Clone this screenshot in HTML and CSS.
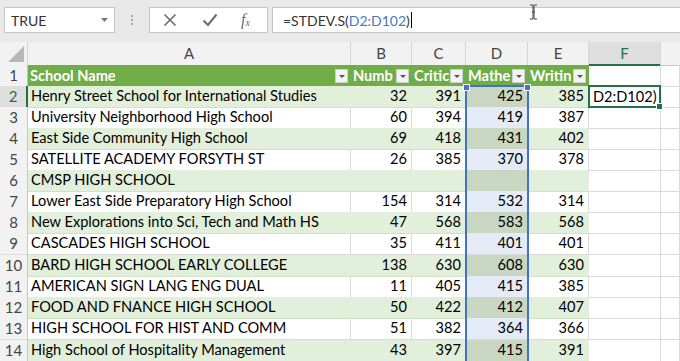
FILE: index.html
```html
<!DOCTYPE html>
<html>
<head>
<meta charset="utf-8">
<link rel="stylesheet" href="styles.css">
</head>
<body>
<div class="toolbar">
  <div class="namebox"><span>TRUE</span><svg class="dd" width="7" height="4" viewBox="0 0 7 4"><path d="M0 0h7L3.5 4z" fill="#777"/></svg></div>
  <div class="grip"><i></i><i></i><i></i></div>
  <div class="fnbox">
    <svg class="ic" width="14" height="14" viewBox="0 0 14 14"><path d="M1.5 1.5l11 11M12.5 1.5l-11 11" stroke="#6b6b6b" stroke-width="1.6" fill="none"/></svg>
    <svg class="ic" width="16" height="14" viewBox="0 0 16 14"><path d="M1.5 7.5l4.5 4.5L14.5 1.5" stroke="#6b6b6b" stroke-width="2" fill="none"/></svg>
    <span class="fx">f<sub>x</sub></span>
  </div>
  <div class="formula"><span>=STDEV.S(</span><span class="ref">D2:D102</span><span>)</span><span class="caret"></span>
    <svg class="ibeam" width="9" height="16" viewBox="0 0 9 16"><path d="M1 1h3v14H1M8 1H5v14h3M3 8h3" stroke="#444" stroke-width="1" fill="none"/></svg>
  </div>
</div>
<div class="sheet">
  <div class="row colhead">
    <div class="corner"><svg width="16" height="16" viewBox="0 0 16 16"><path d="M16 0v16H0z" fill="#b7b7b7"/></svg></div>
    <div class="ch">A</div><div class="ch">B</div><div class="ch">C</div><div class="ch">D</div><div class="ch">E</div><div class="ch active">F</div><div class="ch last"></div>
  </div>
  <div class="row">
    <div class="rh">1</div>
    <div class="c hd"><span>School Name</span><b class="fb"></b></div>
    <div class="c hd"><span>Numb</span><b class="fb"></b></div>
    <div class="c hd"><span>Critic</span><b class="fb"></b></div>
    <div class="c hd"><span>Mathe</span><b class="fb"></b></div>
    <div class="c hd"><span>Writin</span><b class="fb"></b></div>
    <div class="c"></div><div class="c"></div>
  </div>
  <div class="row band">
    <div class="rh active">2</div>
    <div class="c t">Henry Street School for International Studies</div>
    <div class="c t n">32</div><div class="c t n">391</div><div class="c t n sel">425</div><div class="c t n">385</div>
    <div class="c cur">D2:D102)</div><div class="c"></div>
  </div>
  <div class="row">
    <div class="rh">3</div>
    <div class="c t">University Neighborhood High School</div>
    <div class="c t n">60</div><div class="c t n">394</div><div class="c t n sel">419</div><div class="c t n">387</div>
    <div class="c"></div><div class="c"></div>
  </div>
  <div class="row band">
    <div class="rh">4</div>
    <div class="c t">East Side Community High School</div>
    <div class="c t n">69</div><div class="c t n">418</div><div class="c t n sel">431</div><div class="c t n">402</div>
    <div class="c"></div><div class="c"></div>
  </div>
  <div class="row">
    <div class="rh">5</div>
    <div class="c t">SATELLITE ACADEMY FORSYTH ST</div>
    <div class="c t n">26</div><div class="c t n">385</div><div class="c t n sel">370</div><div class="c t n">378</div>
    <div class="c"></div><div class="c"></div>
  </div>
  <div class="row band">
    <div class="rh">6</div>
    <div class="c t">CMSP HIGH SCHOOL</div>
    <div class="c t n"></div><div class="c t n"></div><div class="c t n sel"></div><div class="c t n"></div>
    <div class="c"></div><div class="c"></div>
  </div>
  <div class="row">
    <div class="rh">7</div>
    <div class="c t">Lower East Side Preparatory High School</div>
    <div class="c t n">154</div><div class="c t n">314</div><div class="c t n sel">532</div><div class="c t n">314</div>
    <div class="c"></div><div class="c"></div>
  </div>
  <div class="row band">
    <div class="rh">8</div>
    <div class="c t">New Explorations into Sci, Tech and Math HS</div>
    <div class="c t n">47</div><div class="c t n">568</div><div class="c t n sel">583</div><div class="c t n">568</div>
    <div class="c"></div><div class="c"></div>
  </div>
  <div class="row tall">
    <div class="rh">9</div>
    <div class="c t">CASCADES HIGH SCHOOL</div>
    <div class="c t n">35</div><div class="c t n">411</div><div class="c t n sel">401</div><div class="c t n">401</div>
    <div class="c"></div><div class="c"></div>
  </div>
  <div class="row band">
    <div class="rh">10</div>
    <div class="c t">BARD HIGH SCHOOL EARLY COLLEGE</div>
    <div class="c t n">138</div><div class="c t n">630</div><div class="c t n sel">608</div><div class="c t n">630</div>
    <div class="c"></div><div class="c"></div>
  </div>
  <div class="row">
    <div class="rh">11</div>
    <div class="c t">AMERICAN SIGN LANG ENG DUAL</div>
    <div class="c t n">11</div><div class="c t n">405</div><div class="c t n sel">415</div><div class="c t n">385</div>
    <div class="c"></div><div class="c"></div>
  </div>
  <div class="row band">
    <div class="rh">12</div>
    <div class="c t">FOOD AND FNANCE HIGH SCHOOL</div>
    <div class="c t n">50</div><div class="c t n">422</div><div class="c t n sel">412</div><div class="c t n">407</div>
    <div class="c"></div><div class="c"></div>
  </div>
  <div class="row tall">
    <div class="rh">13</div>
    <div class="c t">HIGH SCHOOL FOR HIST AND COMM</div>
    <div class="c t n">51</div><div class="c t n">382</div><div class="c t n sel">364</div><div class="c t n">366</div>
    <div class="c"></div><div class="c"></div>
  </div>
  <div class="row band">
    <div class="rh">14</div>
    <div class="c t">High School of Hospitality Management</div>
    <div class="c t n">43</div><div class="c t n">397</div><div class="c t n sel">415</div><div class="c t n">391</div>
    <div class="c"></div><div class="c"></div>
  </div>
  <div class="selbox"><i class="hl"></i><i class="hr"></i></div>
</div>
</body>
</html>
```
FILE: styles.css
```css
html, body {
  margin: 0;
  padding: 0;
}
body {
  width: 680px;
  height: 361px;
  overflow: hidden;
  background: #fff;
  font-family: Lato, "Open Sans", sans-serif;
  color: #000;
}
.toolbar {
  height: 42px;
  box-sizing: border-box;
  background: #e9e9e9;
  padding-top: 7px;
  display: flex;
  align-items: flex-start;
}
.namebox {
  margin-left: 4px;
  width: 111px;
  height: 26px;
  box-sizing: border-box;
  background: #fff;
  border: 1px solid #c6c6c6;
  display: flex;
  align-items: center;
  justify-content: space-between;
  padding: 0 6px 0 6px;
  font-size: 14px;
  color: #333;
}
.grip {
  margin: 8px 15px 0 16px;
  width: 3px;
  display: flex;
  flex-direction: column;
  gap: 2px;
}
.grip i {
  display: block;
  width: 2px;
  height: 2px;
  background: #a6a6a6;
}
.fnbox {
  width: 119px;
  height: 26px;
  box-sizing: border-box;
  background: #fff;
  border: 1px solid #c6c6c6;
  display: flex;
  align-items: center;
  padding-left: 13px;
  gap: 25px;
}
.fx {
  font-family: "Liberation Serif", serif;
  font-style: italic;
  font-size: 16px;
  color: #6b6b6b;
  line-height: 1;
  margin-left: -2px;
}
.fx sub {
  font-size: 10px;
  vertical-align: -1px;
}
.formula {
  position: relative;
  flex: 1;
  margin-left: 4px;
  height: 26px;
  box-sizing: border-box;
  background: #fff;
  border: 1px solid #c6c6c6;
  border-right: none;
  display: flex;
  align-items: center;
  padding-left: 10px;
  font-size: 14px;
  color: #333;
}
.formula .ref {
  color: #4a76c2;
}
.caret {
  display: inline-block;
  width: 1px;
  height: 16px;
  background: #000;
  margin-left: 1px;
}
.ibeam {
  position: absolute;
  left: 256px;
  top: -4px;
}
.sheet {
  position: relative;
  height: 319px;
  overflow: hidden;
}
.row {
  display: grid;
  grid-template-columns: 28px 323px 61px 54px 62px 61px 72px 19px;
  height: 21px;
}
.row.tall {
  height: 22px;
}
.row.colhead {
  height: 23px;
  background: #f2f2f2;
}
.corner {
  display: flex;
  align-items: flex-end;
  justify-content: flex-end;
  padding: 0 3px 3px 0;
  border-right: 1px solid #d4d4d4;
  border-bottom: 1px solid #c6c6c6;
}
.ch {
  border-right: 1px solid #d4d4d4;
  border-bottom: 1px solid #c6c6c6;
  font-size: 15px;
  color: #444;
  text-align: center;
  line-height: 22px;
}
.ch.active {
  background: #dedede;
  color: #217346;
  border-bottom: 2px solid #217346;
}
.ch.last {
  border-right: none;
}
.row > div {
  box-sizing: border-box;
  min-width: 0;
}
.rh {
  background: #f2f2f2;
  border-right: 1px solid #c6c6c6;
  border-bottom: 1px solid #dcdcdc;
  text-align: center;
  font-size: 15px;
  color: #444;
  line-height: 21px;
}
.rh.active {
  background: #dedede;
  color: #217346;
  border-right: 2px solid #217346;
}
.c {
  border-right: 1px solid #dadada;
  border-bottom: 1px solid #dadada;
  font-size: 14.6px;
  line-height: 20px;
  padding: 0 3px;
  white-space: nowrap;
  overflow: hidden;
}
.c.n {
  text-align: right;
  padding-right: 4px;
}
.c.hd {
  background: #70ad47;
  border-color: #70ad47;
  border-bottom-color: #70ad47;
  color: #fff;
  font-weight: 700;
  display: flex;
  align-items: center;
  padding: 0 2px;
}
.c.hd span {
  flex: 1;
  white-space: nowrap;
}
.fb {
  width: 13px;
  height: 14px;
  box-sizing: border-box;
  flex: none;
  background: #f3f3f3;
  border: 1px solid #cfcfcf;
  position: relative;
}
.fb::after {
  content: "";
  position: absolute;
  left: 3px;
  top: 5px;
  border-left: 3px solid transparent;
  border-right: 3px solid transparent;
  border-top: 3px solid #555;
}
.band .c.t {
  background: #e2efda;
  border-right-color: #e2efda;
  border-bottom-color: #cfe2c3;
}
.c.sel {
  background: #e4ebf6;
}
.band .c.sel {
  background: #c9d6c1;
  border-right-color: #c9d6c1;
}
.c.cur {
  position: relative;
  overflow: visible;
  padding-left: 4px;
  line-height: 21px;
}
.c.cur::after {
  content: "";
  position: absolute;
  left: -1px;
  top: -1px;
  right: -1px;
  bottom: -1px;
  border: 2px solid #217346;
}
.c.cur::before {
  content: "";
  position: absolute;
  right: -3px;
  bottom: -3px;
  width: 5px;
  height: 5px;
  background: #217346;
  border: 1px solid #fff;
  z-index: 2;
}
.selbox {
  position: absolute;
  left: 465px;
  top: 43px;
  bottom: -4px;
  width: 64px;
  box-sizing: border-box;
  border: 2px solid #4472c4;
  border-bottom: none;
  pointer-events: none;
}
.selbox .hl, .selbox .hr {
  position: absolute;
  top: -3px;
  width: 5px;
  height: 5px;
  background: #4472c4;
  border: 1px solid #fff;
}
.selbox .hl { left: -4px; }
.selbox .hr { right: -4px; }
```
